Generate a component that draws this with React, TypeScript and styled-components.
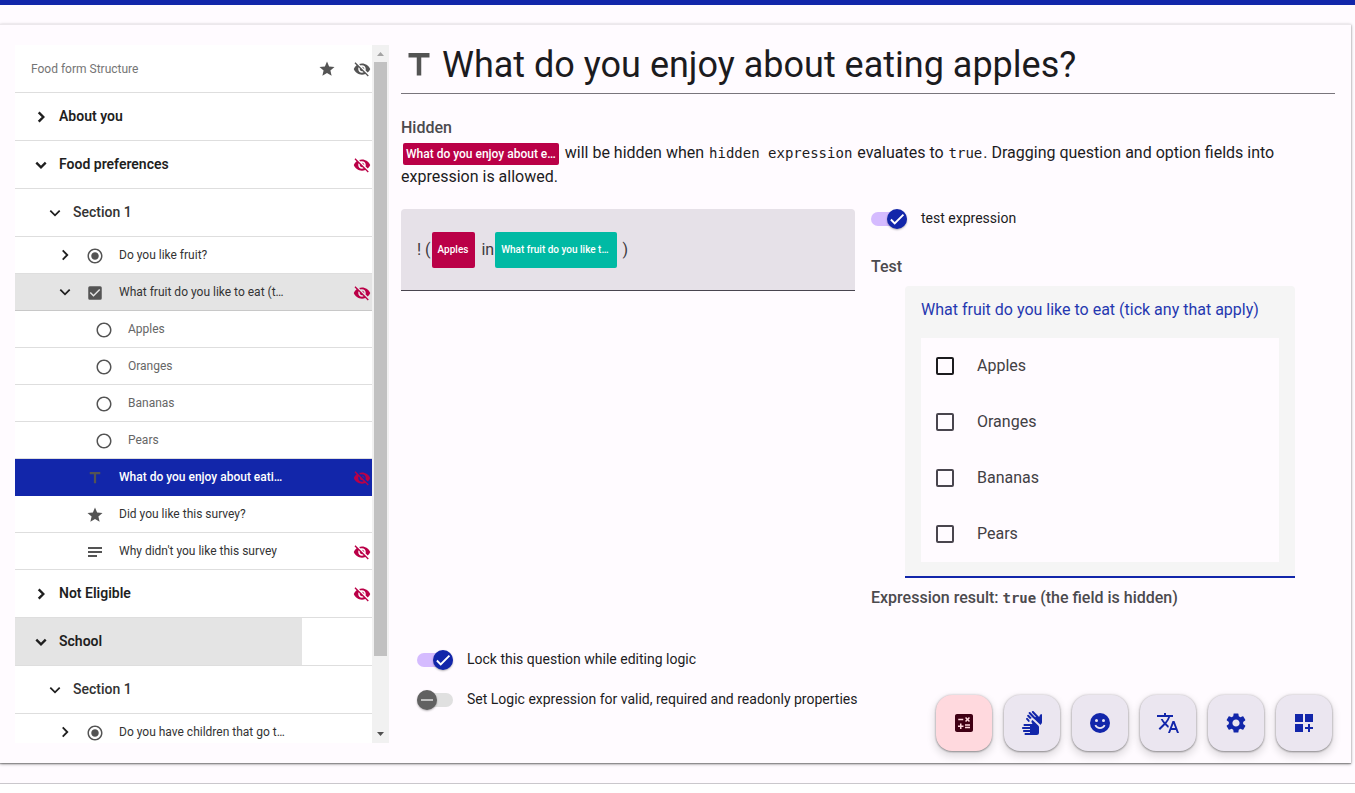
import React, { useState } from 'react';
import styled, { createGlobalStyle, css } from 'styled-components';
import {
  MdCalculate,
  MdCheckBox,
  MdDashboardCustomize,
  MdRadioButtonChecked,
  MdRadioButtonUnchecked,
  MdSettings,
  MdSignLanguage,
  MdStar,
  MdTitle,
  MdTranslate,
  MdVisibilityOff,
} from 'react-icons/md';

const color = {
  primary: '#1226aa',
  accent: '#ba0047',
  teal: '#00baa4',
  surface: '#fffbff',
  icon: '#545454',
  line: '#dedede',
};

const GlobalStyle = createGlobalStyle`
  *, *::before, *::after { box-sizing: border-box; }
  body {
    margin: 0;
    background: #fff;
    color: #1c1b1e;
    font: 400 16px/24px Roboto, sans-serif;
  }
  button, input { font: inherit; color: inherit; }
  h1, h2, p { margin: 0; }
`;

const Page = styled.div`
  min-height: calc(100vh - 9px);
  padding: 19px 4px 19px 0;
  border-top: 5px solid ${color.primary};
  border-bottom: 1px solid #cac7cc;
  background: ${color.surface};
`;

const Card = styled.div`
  display: flex;
  align-items: flex-start;
  min-height: calc(100vh - 54px);
  padding: 20px 16px 20px 15px;
  border-top: 1px solid #ece8ec;
  background: ${color.surface};
  box-shadow: 0 1px 3px rgba(0, 0, 0, 0.4), 0 1px 1px rgba(0, 0, 0, 0.25);
`;

const Sidebar = styled.aside`
  display: flex;
  flex: 0 0 374px;
  height: calc(100vh - 95px);
  overflow: hidden;
  background: #fff;
`;

const Tree = styled.nav`
  flex: 1;
  min-width: 0;
`;

const Scrollbar = styled.div`
  display: flex;
  flex-direction: column;
  align-items: center;
  width: 17px;
  background: #f1f1f1;
`;

const ScrollArrow = styled.svg`
  flex: none;
  display: block;
  width: 17px;
  height: 17px;
`;

const ScrollTrack = styled.div`
  flex: 1;
  width: 13px;
`;

const ScrollThumb = styled.div`
  height: calc(100% - 70px);
  background: #c1c1c1;
`;

type Level = 'root' | 'page' | 'section' | 'question' | 'option';

const TreeRow = styled.div<{ $tall?: boolean; $tone?: 'hover' | 'active' }>`
  display: flex;
  height: ${(p) => (p.$tall ? 48 : 37)}px;
  border-bottom: 1px solid ${color.line};
  ${(p) => p.$tone === 'hover' && css`background: #e4e4e4; border-color: #c8c8c8;`}
  ${(p) => p.$tone === 'active' && css`background: ${color.primary}; border-color: ${color.primary};`}
`;

const indent: Record<Level, number> = { root: 16, page: 14, section: 28, question: 38, option: 80 };

const TreeButton = styled.button<{ $level: Level; $pressed?: boolean; $active?: boolean }>`
  display: flex;
  flex: 1;
  align-items: center;
  min-width: 0;
  padding: 0 0 0 ${(p) => indent[p.$level]}px;
  border: 0;
  background: ${(p) => (p.$pressed ? '#e4e4e4' : 'transparent')};
  text-align: left;
  white-space: nowrap;
  font-size: ${(p) => (p.$level === 'page' || p.$level === 'section' ? 14 : 12)}px;
  line-height: 20px;
  font-weight: ${(p) => (p.$level === 'page' || p.$level === 'section' || p.$active ? 500 : 400)};
  color: ${(p) => (p.$active ? '#fff' : p.$level === 'root' ? '#757575' : p.$level === 'option' ? '#666' : '#333')};
  ${(p) => p.$level === 'page' && css`font-weight: 600; color: #1f1f1f;`}
`;

const ChevronSlot = styled.span<{ $tall?: boolean }>`
  display: flex;
  justify-content: center;
  width: 24px;
  margin-right: 6px;
  padding-top: ${(p) => (p.$tall ? 1 : 0)}px;
`;

const TypeSlot = styled.span<{ $afterChevron?: boolean }>`
  display: flex;
  margin: 2px 15px 0 ${(p) => (p.$afterChevron ? 3 : 0)}px;
  color: ${color.icon};
`;

const ChevronSpace = styled.span`
  width: 30px;
`;

const Label = styled.span`
  padding-bottom: 1px;
`;

const RootLabel = styled.span`
  padding-top: 1px;
`;

const Flags = styled.div<{ $tall?: boolean; $muted?: boolean }>`
  display: grid;
  grid-template-columns: 35px 35px;
  align-items: center;
  justify-items: end;
  padding: ${(p) => (p.$tall ? 1 : 2)}px 1px 0 0;
  margin-left: -1px;
  color: ${(p) => (p.$muted ? color.icon : color.accent)};

  svg:only-child { grid-column: 2; }
`;

const Main = styled.main`
  flex: 1;
  min-width: 0;
  padding-left: 12px;
`;

const Title = styled.h1`
  display: flex;
  align-items: center;
  gap: 5px;
  height: 49px;
  padding: 0 0 8px;
  border-bottom: 1px solid #79757c;
  font-size: 36px;
  line-height: 40px;
  font-weight: 400;

  svg { color: ${color.icon}; }
`;

const Heading = styled.h2`
  font-size: 16px;
  line-height: 24px;
  font-weight: 500;
  color: #4c4a4e;
`;

const Intro = styled.section`
  padding-top: 22px;
`;

const IntroText = styled.p`
  padding-top: 1px;
`;

const Code = styled.code`
  padding: 0 1px;
  font-family: "DejaVu Sans Mono", monospace;
  font-size: 14px;
`;

const InlineChip = styled.span`
  display: inline-block;
  height: 22px;
  margin: 0 2px;
  padding: 0 3px;
  border-radius: 2px;
  background: ${color.accent};
  color: #fff;
  font-size: 12px;
  line-height: 22px;
  font-weight: 500;
  vertical-align: middle;
`;

const Columns = styled.div`
  display: grid;
  grid-template-columns: 1fr 1fr;
  gap: 16px;
  align-items: start;
  padding: 20px 10px 0 0;
`;

const Expression = styled.div`
  display: flex;
  align-items: center;
  height: 82px;
  padding-left: 16px;
  border-bottom: 1px solid #49454f;
  border-radius: 4px 4px 0 0;
  background: #e6e1e8;
  color: #3c3a3e;
`;

const Token = styled.button<{ $teal?: boolean }>`
  height: 36px;
  margin: 0 6px 0 1px;
  padding: 0 ${(p) => (p.$teal ? 8 : 7)}px 0 6px;
  border: 0;
  border-radius: 2px;
  background: ${(p) => (p.$teal ? color.teal : color.accent)};
  color: #fff;
  font-size: 10px;
  font-weight: 500;
`;

const TestColumn = styled.div``;

const Switch = styled.label`
  display: flex;
  align-items: center;
  gap: 14px;
  height: 20px;
  font-size: 14px;
  line-height: 20px;
`;

const SwitchText = styled.span`
  padding-bottom: 2px;
`;

const SwitchTrack = styled.span<{ $on: boolean }>`
  position: relative;
  display: flex;
  align-items: center;
  justify-content: ${(p) => (p.$on ? 'flex-end' : 'flex-start')};
  width: 36px;
  height: 14px;
  border-radius: 7px;
  background: ${(p) => (p.$on ? '#d5bbff' : '#e0e0e0')};
`;

const SwitchInput = styled.input`
  position: absolute;
  inset: 0;
  margin: 0;
  opacity: 0;
`;

const SwitchHandle = styled.span<{ $on: boolean }>`
  display: flex;
  align-items: center;
  justify-content: center;
  flex: none;
  width: 20px;
  height: 20px;
  border-radius: 50%;
  background: ${(p) => (p.$on ? color.primary : '#616161')};
  box-shadow: 0 1px 2px rgba(0, 0, 0, 0.3);
`;

const TestHeading = styled(Heading)`
  padding-top: 26px;
`;

const TestCard = styled.fieldset`
  margin: 7px 30px 0 34px;
  padding: 12px 16px 14px;
  border: 0;
  border-bottom: 2px solid ${color.primary};
  border-radius: 4px 4px 0 0;
  background: #f5f5f5;
`;

const TestLegend = styled.legend`
  float: left;
  width: 100%;
  margin-bottom: 16px;
  padding: 0;
  color: #2538b0;
`;

const OptionList = styled.div`
  clear: both;
  background: ${color.surface};
`;

const OptionLabel = styled.label`
  display: flex;
  align-items: center;
  gap: 23px;
  height: 56px;
  padding-left: 15px;
  color: #424044;
`;

const CheckInput = styled.input<{ $dark?: boolean }>`
  appearance: none;
  width: 18px;
  height: 18px;
  margin: 0;
  border: 2px solid ${(p) => (p.$dark ? '#1c1b1e' : '#49454e')};
  border-radius: 2px;

  &:checked { background: ${color.primary}; border-color: ${color.primary}; }
`;

const Result = styled(Heading)`
  padding-top: 8px;

  code { font: 700 14px/24px "DejaVu Sans Mono", monospace; }
`;

const Toggles = styled.div`
  display: grid;
  gap: 20px;
  padding: 40px 16px 0;
`;

const Actions = styled.div`
  position: fixed;
  right: 23px;
  bottom: 42px;
  display: flex;
  gap: 12px;
`;

const Fab = styled.button<{ $current?: boolean }>`
  display: flex;
  align-items: center;
  justify-content: center;
  width: 56px;
  height: 56px;
  padding: 0;
  border: 0;
  border-radius: 16px;
  background: ${(p) => (p.$current ? '#ffd9de' : '#ebe6f0')};
  color: ${(p) => (p.$current ? '#400014' : color.primary)};
  box-shadow: 0 1px 2px rgba(0, 0, 0, 0.3), 0 4px 8px 1px rgba(0, 0, 0, 0.14), 0 0 3px rgba(0, 0, 0, 0.2);
`;

function Chevron({ open, bold }: { open?: boolean; bold?: boolean }) {
  return (
    <svg width="16" height="16" viewBox="0 0 16 16" fill="none" stroke="#1f1f1f" strokeWidth={bold ? 2.4 : 1.8} aria-hidden="true">
      <path d={open ? 'M3.3 5.7 8 10.3 12.7 5.7' : 'M5.7 3.3 10.3 8 5.7 12.7'} />
    </svg>
  );
}

function LongText() {
  return (
    <svg width="18" height="18" viewBox="0 0 18 18" fill="currentColor" aria-hidden="true">
      <path d="M2 4h14v2H2zM2 8h14v2H2zM2 12h9v2H2z" />
    </svg>
  );
}

function Mood() {
  return (
    <svg width="24" height="24" viewBox="0 0 24 24" aria-hidden="true">
      <circle cx="12" cy="12" r="10" fill="currentColor" />
      <circle cx="8.5" cy="9.5" r="1.5" fill="#ebe6f0" />
      <circle cx="15.5" cy="9.5" r="1.5" fill="#ebe6f0" />
      <path d="M7.3 14.2a5.2 5.2 0 0 0 9.4 0" fill="none" stroke="#ebe6f0" strokeWidth="1.7" />
    </svg>
  );
}

interface Item {
  text: string;
  level: Level;
  open?: boolean;
  icon?: React.ReactNode;
  hidden?: boolean;
  tone?: 'hover' | 'active';
  pressed?: boolean;
}

const items: Item[] = [
  { text: 'About you', level: 'page', open: false },
  { text: 'Food preferences', level: 'page', open: true, hidden: true },
  { text: 'Section 1', level: 'section', open: true },
  { text: 'Do you like fruit?', level: 'question', open: false, icon: <MdRadioButtonChecked size={18} /> },
  { text: 'What fruit do you like to eat (t…', level: 'question', open: true, icon: <MdCheckBox size={18} />, hidden: true, tone: 'hover' },
  { text: 'Apples', level: 'option', icon: <MdRadioButtonUnchecked size={18} /> },
  { text: 'Oranges', level: 'option', icon: <MdRadioButtonUnchecked size={18} /> },
  { text: 'Bananas', level: 'option', icon: <MdRadioButtonUnchecked size={18} /> },
  { text: 'Pears', level: 'option', icon: <MdRadioButtonUnchecked size={18} /> },
  { text: 'What do you enjoy about eati…', level: 'question', icon: <MdTitle size={18} />, hidden: true, tone: 'active' },
  { text: 'Did you like this survey?', level: 'question', icon: <MdStar size={18} /> },
  { text: "Why didn't you like this survey", level: 'question', icon: <LongText />, hidden: true },
  { text: 'Not Eligible', level: 'page', open: false, hidden: true },
  { text: 'School', level: 'page', open: true, pressed: true },
  { text: 'Section 1', level: 'section', open: true },
  { text: 'Do you have children that go t…', level: 'question', open: false, icon: <MdRadioButtonChecked size={18} /> },
];

function TreeItem({ item }: { item: Item }) {
  const { level, open, icon, tone } = item;
  const hasChevron = open !== undefined;
  const tall = level === 'page' || level === 'section';
  return (
    <TreeRow $tall={tall} $tone={tone}>
      <TreeButton type="button" $level={level} $pressed={item.pressed} $active={tone === 'active'} aria-expanded={open}>
        {hasChevron && <ChevronSlot $tall={tall}><Chevron open={open} bold={level === 'page'} /></ChevronSlot>}
        {!hasChevron && level === 'question' && <ChevronSpace />}
        {icon && <TypeSlot $afterChevron={level === 'question'}>{icon}</TypeSlot>}
        <Label>{item.text}</Label>
      </TreeButton>
      <Flags $tall={tall}>{item.hidden && <MdVisibilityOff size={18} aria-label="Hidden" />}</Flags>
    </TreeRow>
  );
}

function Toggle({ label, initial }: { label: string; initial: boolean }) {
  const [on, setOn] = useState(initial);
  return (
    <Switch>
      <SwitchTrack $on={on}>
        <SwitchInput type="checkbox" role="switch" checked={on} onChange={() => setOn(!on)} />
        <SwitchHandle $on={on}>
          <svg width="18" height="18" viewBox="0 0 24 24" fill={on ? '#fff' : '#e0e0e0'} aria-hidden="true">
            <path d={on ? 'M19.69 5.23 8.96 15.96l-4.23-4.23L2.96 13.5l6 6L21.46 7z' : 'M20 13H4v-2h16v2z'} />
          </svg>
        </SwitchHandle>
      </SwitchTrack>
      <SwitchText>{label}</SwitchText>
    </Switch>
  );
}

const options = ['Apples', 'Oranges', 'Bananas', 'Pears'];

export default function App() {
  return (
    <Page>
      <GlobalStyle />
      <Card>
        <Sidebar>
          <Tree aria-label="Form structure">
            <TreeRow $tall>
              <TreeButton type="button" $level="root"><RootLabel>Food form Structure</RootLabel></TreeButton>
              <Flags $tall $muted><MdStar size={18} /><MdVisibilityOff size={18} /></Flags>
            </TreeRow>
            {items.map((item, i) => <TreeItem key={i} item={item} />)}
          </Tree>
          <Scrollbar aria-hidden="true">
            <ScrollArrow viewBox="0 0 17 17"><path d="M5 11h7L8.5 7z" fill="#a3a3a3" /></ScrollArrow>
            <ScrollTrack><ScrollThumb /></ScrollTrack>
            <ScrollArrow viewBox="0 0 17 17"><path d="M5 6h7l-3.500 4z" fill="#505050" /></ScrollArrow>
          </Scrollbar>
        </Sidebar>

        <Main>
          <Title><MdTitle size={36} aria-hidden="true" /> What do you enjoy about eating apples?</Title>
          <Intro>
            <Heading>Hidden</Heading>
            <IntroText>
              <InlineChip>What do you enjoy about e…</InlineChip> will be hidden when <Code>hidden expression</Code> evaluates
              to <Code>true</Code>. Dragging question and option fields into expression is allowed.
            </IntroText>
          </Intro>
          <Columns>
            <Expression>
              ! (<Token type="button">Apples</Token>in
              <Token type="button" $teal>What fruit do you like t…</Token>)
            </Expression>
            <TestColumn>
              <Toggle label="test expression" initial />
              <TestHeading>Test</TestHeading>
              <TestCard>
                <TestLegend>What fruit do you like to eat (tick any that apply)</TestLegend>
                <OptionList>
                  {options.map((name, i) => (
                    <OptionLabel key={name}>
                      <CheckInput type="checkbox" $dark={i === 0} />
                      {name}
                    </OptionLabel>
                  ))}
                </OptionList>
              </TestCard>
              <Result>Expression result: <code>true</code> (the field is hidden)</Result>
            </TestColumn>
          </Columns>
          <Toggles>
            <Toggle label="Lock this question while editing logic" initial />
            <Toggle label="Set Logic expression for valid, required and readonly properties" initial={false} />
          </Toggles>
        </Main>
      </Card>

      <Actions>
        <Fab type="button" $current aria-label="Logic"><MdCalculate size={24} /></Fab>
        <Fab type="button" aria-label="Sign language"><MdSignLanguage size={24} /></Fab>
        <Fab type="button" aria-label="Mood"><Mood /></Fab>
        <Fab type="button" aria-label="Translate"><MdTranslate size={24} /></Fab>
        <Fab type="button" aria-label="Settings"><MdSettings size={24} /></Fab>
        <Fab type="button" aria-label="Customise"><MdDashboardCustomize size={24} /></Fab>
      </Actions>
    </Page>
  );
}
